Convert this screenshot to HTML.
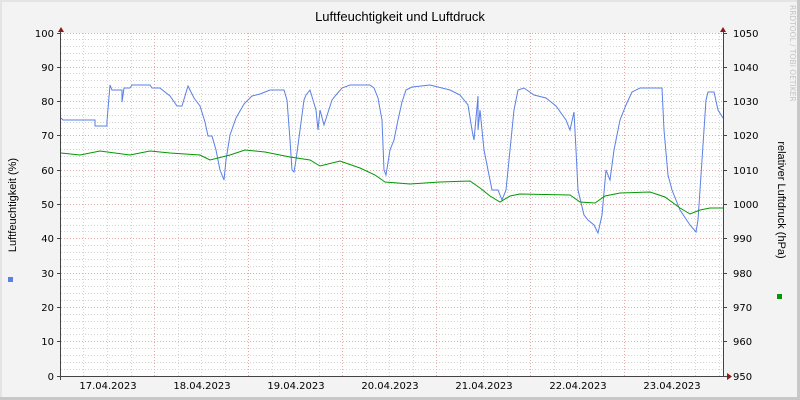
<!DOCTYPE html>
<html><head><meta charset="utf-8"><style>
html,body{margin:0;padding:0;background:#f3f3f3}
svg{display:block}
text{font-family:"DejaVu Sans","Liberation Sans",sans-serif;fill:#000}
</style></head><body>
<svg width="800" height="400" viewBox="0 0 800 400" xmlns="http://www.w3.org/2000/svg">
<rect x="0" y="0" width="800" height="400" fill="#f3f3f3"/>
<rect x="0" y="0" width="800" height="2" fill="#e4e4e4"/>
<rect x="0" y="0" width="2" height="400" fill="#e4e4e4"/>
<rect x="797" y="0" width="3" height="400" fill="#c8c8c8"/>
<rect x="0" y="397" width="800" height="3" fill="#c8c8c8"/>
<rect x="61" y="33" width="662" height="343" fill="#fff"/>
<g id="grid" stroke-width="1" shape-rendering="crispEdges">
<g stroke="#d4d4d4" stroke-dasharray="1,2">
<path d="M61,39.5H723M61,46.5H723M61,53.5H723M61,60.5H723M61,73.5H723M61,80.5H723M61,87.5H723M61,94.5H723M61,108.5H723M61,115.5H723M61,122.5H723M61,128.5H723M61,142.5H723M61,149.5H723M61,156.5H723M61,163.5H723M61,176.5H723M61,183.5H723M61,190.5H723M61,197.5H723M61,211.5H723M61,218.5H723M61,225.5H723M61,231.5H723M61,245.5H723M61,252.5H723M61,259.5H723M61,266.5H723M61,279.5H723M61,286.5H723M61,293.5H723M61,300.5H723M61,314.5H723M61,321.5H723M61,328.5H723M61,334.5H723M61,348.5H723M61,355.5H723M61,362.5H723M61,369.5H723"/>
<path d="M83.5,33V376M107.5,33V376M131.5,33V376M178.5,33V376M201.5,33V376M225.5,33V376M272.5,33V376M295.5,33V376M319.5,33V376M366.5,33V376M389.5,33V376M413.5,33V376M460.5,33V376M483.5,33V376M507.5,33V376M554.5,33V376M577.5,33V376M601.5,33V376M648.5,33V376M671.5,33V376M695.5,33V376M719.5,33V376"/>
</g>
<g stroke="#e3a8a8" stroke-dasharray="1,2">
<path d="M61,33.5H723M61,67.5H723M61,101.5H723M61,135.5H723M61,170.5H723M61,204.5H723M61,238.5H723M61,273.5H723M61,307.5H723M61,341.5H723"/>
<path d="M154.5,33V376M248.5,33V376M342.5,33V376M436.5,33V376M530.5,33V376M624.5,33V376"/>
</g>
</g>
<polyline fill="none" stroke="#5a7fe6" stroke-width="1" points="61,118 63,120 95,120 95,126 107,126 107,121 110,85 112,90 122,90 122,102 124,88 130,88 132,85 150,85 152,88 160,88 170,96 177,106 182,106 188,86 194,98 200,106 205,122 208,136 212,136 216,150 220,170 224,180 226,160 230,135 236,118 244,104 252,96 260,94 270,90 284,90 287,100 290,140 292,170 294,172 296,160 300,130 304,100 306,95 310,90 316,110 318,130 320,110 324,125 332,100 336,95 342,88 350,85 370,85 374,88 378,98 382,120 384,170 386,175 390,150 394,140 398,120 402,102 406,90 412,87 430,85 450,90 460,95 468,105 472,130 474,140 478,96 478,130 480,110 484,150 488,170 492,190 498,190 502,200 506,190 510,150 514,110 518,90 524,88 534,95 546,98 556,106 566,120 570,130 574,112 576,150 578,190 584,215 588,220 594,225 598,233 602,215 606,170 610,180 614,150 620,120 626,105 632,92 640,88 662,88 664,130 668,175 672,190 676,200 680,210 690,225 696,232 698,220 702,160 706,100 708,92 714,92 718,110 723,118"/>
<polyline fill="none" stroke="#009900" stroke-width="1" points="61,153 80,155 100,151 130,155 150,151 170,153 200,155 210,160 230,155 245,150 265,152 290,157 310,160 320,166 340,161 360,168 375,175 385,182 410,184 440,182 470,181 480,188 490,196 500,202 510,196 520,194 570,195 580,202 595,203 605,196 620,193 650,192 665,197 680,208 690,214 700,210 710,208 723,208"/>
<g stroke="#444" shape-rendering="crispEdges">
<path d="M60.5,30V380M57,376.5H727M723.5,30V376"/>
<path d="M57,33.5H61M57,67.5H61M57,101.5H61M57,135.5H61M57,170.5H61M57,204.5H61M57,238.5H61M57,273.5H61M57,307.5H61M57,341.5H61M723,33.5H727M723,67.5H727M723,101.5H727M723,135.5H727M723,170.5H727M723,204.5H727M723,238.5H727M723,273.5H727M723,307.5H727M723,341.5H727"/>
</g>
<path d="M58,32L61,27L64,32Z M720,32L723,27L726,32Z M727,373L732,376.5L727,380Z" fill="#8b1a1a"/>
<g font-size="10" text-anchor="end" style="font-family:'Liberation Sans',sans-serif">
<text x="54" y="37">100</text><text x="54" y="71">90</text><text x="54" y="105">80</text><text x="54" y="139">70</text><text x="54" y="174">60</text><text x="54" y="208">50</text><text x="54" y="242">40</text><text x="54" y="277">30</text><text x="54" y="311">20</text><text x="54" y="345">10</text><text x="54" y="380">0</text>
</g>
<g font-size="10" style="font-family:'Liberation Sans',sans-serif">
<text x="733" y="37">1050</text><text x="733" y="71">1040</text><text x="733" y="105">1030</text><text x="733" y="139">1020</text><text x="733" y="174">1010</text><text x="733" y="208">1000</text><text x="733" y="242">990</text><text x="733" y="277">980</text><text x="733" y="311">970</text><text x="733" y="345">960</text><text x="733" y="380">950</text>
</g>
<g font-size="10" text-anchor="middle" style="font-family:'Liberation Sans',sans-serif">
<text x="108" y="389">17.04.2023</text><text x="202" y="389">18.04.2023</text><text x="296" y="389">19.04.2023</text><text x="390" y="389">20.04.2023</text><text x="484" y="389">21.04.2023</text><text x="578" y="389">22.04.2023</text><text x="672" y="389">23.04.2023</text>
</g>
<text x="400" y="21" font-size="13" text-anchor="middle" style="font-family:'Liberation Sans',sans-serif">Luftfeuchtigkeit und Luftdruck</text>
<text transform="translate(16,205) rotate(-90)" font-size="11" text-anchor="middle" style="font-family:'Liberation Sans',sans-serif">Luftfeuchtigkeit (%)</text>
<rect x="8" y="277" width="5" height="5" fill="#5a7fe6"/>
<text transform="translate(778,200) rotate(90)" font-size="11" text-anchor="middle" style="font-family:'Liberation Sans',sans-serif">relativer Luftdruck (hPa)</text>
<rect x="777" y="294" width="5" height="5" fill="#009900"/>
<text transform="translate(790,5) rotate(90)" font-size="7.5" style="fill:#c4c4c4">RRDTOOL / TOBI OETIKER</text>
</svg>
</body></html>
